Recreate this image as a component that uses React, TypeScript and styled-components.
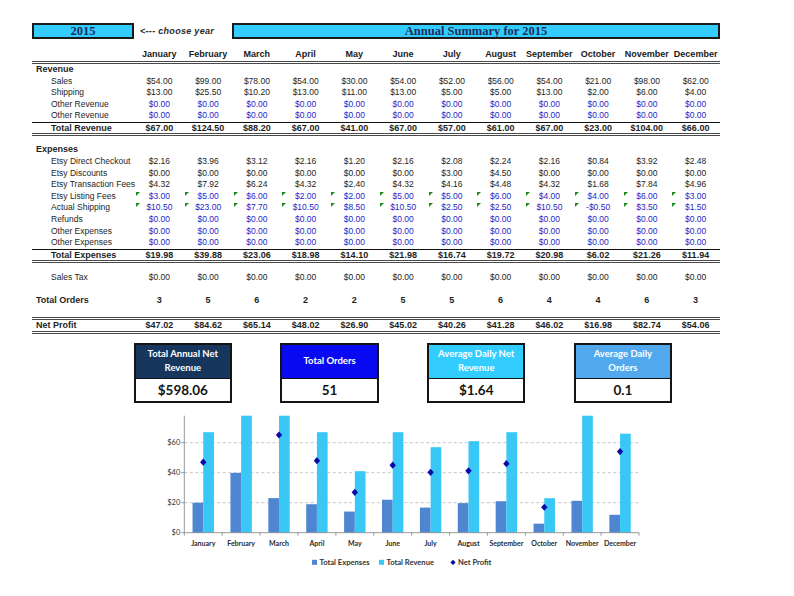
import React from 'react';
import styled, { createGlobalStyle, css } from 'styled-components';

const GlobalStyle = createGlobalStyle`
  html, body { margin: 0; padding: 0; background: #ffffff; }
  body { font-family: "Liberation Sans", Arial, sans-serif; color: #222; }
`;

const MONTHS = ['January', 'February', 'March', 'April', 'May', 'June', 'July', 'August', 'September', 'October', 'November', 'December'];

const fmt = (n: number) => (n < 0 ? `-$${Math.abs(n).toFixed(2)}` : `$${n.toFixed(2)}`);
const zeros = Array(12).fill(0);

const sales = [54, 99, 78, 54, 30, 54, 52, 56, 54, 21, 98, 62];
const shipping = [13, 25.5, 10.2, 13, 11, 13, 5, 5, 13, 2, 6, 4];
const totalRevenue = [67, 124.5, 88.2, 67, 41, 67, 57, 61, 67, 23, 104, 66];
const directCheckout = [2.16, 3.96, 3.12, 2.16, 1.2, 2.16, 2.08, 2.24, 2.16, 0.84, 3.92, 2.48];
const discounts = [0, 0, 0, 0, 0, 0, 3, 4.5, 0, 0, 0, 0];
const transaction = [4.32, 7.92, 6.24, 4.32, 2.4, 4.32, 4.16, 4.48, 4.32, 1.68, 7.84, 4.96];
const listing = [3, 5, 6, 2, 2, 5, 5, 6, 4, 4, 6, 3];
const actualShipping = [10.5, 23, 7.7, 10.5, 8.5, 10.5, 2.5, 2.5, 10.5, -0.5, 3.5, 1.5];
const totalExpenses = [19.98, 39.88, 23.06, 18.98, 14.1, 21.98, 16.74, 19.72, 20.98, 6.02, 21.26, 11.94];
const orders = [3, 5, 6, 2, 2, 5, 5, 6, 4, 4, 6, 3];
const netProfit = [47.02, 84.62, 65.14, 48.02, 26.9, 45.02, 40.26, 41.28, 46.02, 16.98, 82.74, 54.06];

type Tone = 'black' | 'blue';
type LineRow = { label: string; values: number[]; tone?: Tone; flag?: boolean };

const revenueRows: LineRow[] = [
  { label: 'Sales', values: sales },
  { label: 'Shipping', values: shipping },
  { label: 'Other Revenue', values: zeros, tone: 'blue' },
  { label: 'Other Revenue', values: zeros, tone: 'blue' },
];

const expenseRows: LineRow[] = [
  { label: 'Etsy Direct Checkout', values: directCheckout },
  { label: 'Etsy Discounts', values: discounts },
  { label: 'Etsy Transaction Fees', values: transaction },
  { label: 'Etsy Listing Fees', values: listing, tone: 'blue', flag: true },
  { label: 'Actual Shipping', values: actualShipping, tone: 'blue', flag: true },
  { label: 'Refunds', values: zeros, tone: 'blue' },
  { label: 'Other Expenses', values: zeros, tone: 'blue' },
  { label: 'Other Expenses', values: zeros, tone: 'blue' },
];

/* ---------- layout ---------- */

const Page = styled.div`
  width: 794px;
  height: 596px;
  box-sizing: border-box;
  padding: 23px 0 0 32px;
  overflow: hidden;
`;

const TopBar = styled.div`
  display: flex;
  align-items: center;
  width: 688px;
  height: 16px;
`;

const YearBox = styled.div`
  box-sizing: border-box;
  width: 102px;
  height: 16px;
  background: #33ccff;
  border: 2px solid #1a1a1a;
  display: flex;
  align-items: center;
  justify-content: center;
  font-family: "Liberation Serif", "Times New Roman", serif;
  font-weight: bold;
  font-size: 12.5px;
  color: #1d2d5c;
`;

const ChooseHint = styled.div`
  box-sizing: border-box;
  width: 98px;
  padding-left: 6px;
  font-family: "Liberation Sans", Arial, sans-serif;
  font-style: italic;
  font-weight: bold;
  font-size: 9px;
  letter-spacing: 0.3px;
  color: #2a2a2a;
  white-space: nowrap;
`;

const TitleBox = styled(YearBox)`
  flex: 1;
  width: auto;
`;

const Table = styled.div`
  width: 688px;
`;

const Row = styled.div<{ $h: number; $top?: string; $bottom?: string; $mt?: number }>`
  display: grid;
  grid-template-columns: 103px repeat(12, 48.75px);
  height: ${(p) => p.$h}px;
  line-height: ${(p) => p.$h}px;
  margin-top: ${(p) => p.$mt ?? 0}px;
  ${(p) => p.$top && `border-top: ${p.$top};`}
  ${(p) => p.$bottom && `border-bottom: ${p.$bottom};`}
`;

const Spacer = styled.div<{ $h: number }>`
  height: ${(p) => p.$h}px;
`;

const Label = styled.div<{ $indent?: boolean; $bold?: boolean }>`
  padding-left: ${(p) => (p.$indent ? 19 : 4)}px;
  font-size: ${(p) => (p.$bold ? 9 : 8.5)}px;
  font-weight: ${(p) => (p.$bold ? 'bold' : 'normal')};
  color: #1e1e1e;
  white-space: nowrap;
  overflow: visible;
`;

const Cell = styled.div<{ $tone?: Tone; $bold?: boolean; $flag?: boolean }>`
  position: relative;
  text-align: center;
  white-space: nowrap;
  overflow: hidden;
  font-size: ${(p) => (p.$bold ? 9 : 8.5)}px;
  font-weight: ${(p) => (p.$bold ? 'bold' : 'normal')};
  color: ${(p) => (p.$tone === 'blue' ? '#1f1fc6' : '#1e1e1e')};
  ${(p) =>
    p.$flag &&
    css`
      &::before {
        content: '';
        position: absolute;
        left: 1px;
        top: 1px;
        border-top: 4px solid #1d8a1d;
        border-right: 4px solid transparent;
      }
    `}
`;

const HeadCell = styled.div`
  text-align: center;
  white-space: nowrap;
  overflow: hidden;
  font-size: 9px;
  font-weight: bold;
  color: #1a1a1a;
`;

/* ---------- cards ---------- */

const CardRow = styled.div`
  display: flex;
  gap: 48.2px;
  margin: 9px 0 0 101.6px;
`;

const Card = styled.div`
  box-sizing: border-box;
  width: 98.5px;
  height: 60px;
  border: 2px solid #141414;
  display: flex;
  flex-direction: column;
`;

const CardHead = styled.div<{ $bg: string }>`
  height: 33px;
  flex: none;
  background: ${(p) => p.$bg};
  border-bottom: 1px solid #141414;
  color: #ffffff;
  font-family: Lato, "Open Sans", sans-serif;
  font-weight: bold;
  font-size: 9.5px;
  line-height: 14px;
  display: flex;
  align-items: center;
  justify-content: center;
  text-align: center;
  padding: 0 6px;
`;

const CardValue = styled.div`
  flex: 1;
  display: flex;
  align-items: center;
  justify-content: center;
  background: #ffffff;
  font-family: Lato, "Open Sans", sans-serif;
  font-weight: bold;
  font-size: 13.5px;
  color: #151515;
`;

const ChartWrap = styled.div`
  margin: 2px 0 0 108px;
  width: 520px;
  height: 180px;
`;

/* ---------- chart ---------- */

const X0 = 44.3;
const X1 = 499;
const BASE = 127.7;
const TOP = 10.7;
const K = 1.5;
const CW = (X1 - X0) / 12;
const BW = 10.7;

const Chart: React.FC = () => {
  const clipH = (v: number) => Math.min(v * K, BASE - TOP);
  return (
    <svg width="520" height="180" viewBox="0 0 520 180">
      {[20, 40, 60].map((v) => (
        <line key={v} x1={X0} x2={X1} y1={BASE - v * K} y2={BASE - v * K} stroke="#b8b8b8" strokeWidth="0.8" strokeDasharray="3 2.5" />
      ))}
      {totalExpenses.map((e, i) => {
        const cx = X0 + CW * (i + 0.5);
        const eh = clipH(e);
        const rh = clipH(totalRevenue[i]);
        return (
          <g key={i}>
            <rect x={cx - BW} y={BASE - eh} width={BW} height={eh} fill="#4f86d2" />
            <rect x={cx} y={BASE - rh} width={BW} height={rh} fill="#39c8f5" />
          </g>
        );
      })}
      {netProfit.map((n, i) => {
        if (n * K > BASE - TOP) return null;
        const cx = X0 + CW * (i + 0.5);
        const cy = BASE - n * K;
        return <polygon key={i} points={`${cx},${cy - 3.6} ${cx + 3.2},${cy} ${cx},${cy + 3.6} ${cx - 3.2},${cy}`} fill="#0a0aa6" />;
      })}
      <line x1={X0} x2={X0} y1={TOP} y2={BASE} stroke="#8c8c8c" strokeWidth="0.9" />
      <line x1={X0} x2={X1} y1={BASE} y2={BASE} stroke="#8c8c8c" strokeWidth="0.9" />
      {[0, 20, 40, 60].map((v) => (
        <line key={v} x1={X0 - 3} x2={X0} y1={BASE - v * K} y2={BASE - v * K} stroke="#8c8c8c" strokeWidth="0.9" />
      ))}
      {Array.from({ length: 13 }).map((_, i) => (
        <line key={i} x1={X0 + CW * i} x2={X0 + CW * i} y1={BASE} y2={BASE + 3} stroke="#8c8c8c" strokeWidth="0.9" />
      ))}
      {[0, 20, 40, 60].map((v) => (
        <text key={v} x={X0 - 4} y={BASE - v * K + 2.5} textAnchor="end" fontFamily="Lato, sans-serif" fontSize="7.5" fill="#333">
          {`$${v}`}
        </text>
      ))}
      {MONTHS.map((m, i) => (
        <text key={m} x={X0 + CW * (i + 0.5)} y={141} textAnchor="middle" fontFamily="Lato, sans-serif" fontWeight="bold" fontSize="7" fill="#2a2a2a">
          {m}
        </text>
      ))}
      <g fontFamily="Lato, sans-serif" fontWeight="bold" fontSize="7.6" fill="#333">
        <rect x={172} y={154.8} width={5} height={5} fill="#4f86d2" />
        <text x={179.5} y={160}>Total Expenses</text>
        <rect x={239} y={154.8} width={5} height={5} fill="#39c8f5" />
        <text x={246.5} y={160}>Total Revenue</text>
        <polygon points="313,154.8 315.6,157.4 313,160 310.4,157.4" fill="#0a0aa6" />
        <text x={318} y={160}>Net Profit</text>
      </g>
    </svg>
  );
};

/* ---------- app ---------- */

const ValueCells: React.FC<{ values: number[]; tone?: Tone; bold?: boolean; flag?: boolean; plain?: boolean }> = ({ values, tone, bold, flag, plain }) => (
  <>
    {values.map((v, i) => (
      <Cell key={i} $tone={tone} $bold={bold} $flag={flag}>
        {plain ? String(v) : fmt(v)}
      </Cell>
    ))}
  </>
);

const THICK = '3px double #4a4a4a';
const THIN = '1px solid #111';
const RH = 11.6;

export default function App() {
  return (
    <>
      <GlobalStyle />
      <Page>
        <TopBar>
          <YearBox>2015</YearBox>
          <ChooseHint>&lt;--- choose year</ChooseHint>
          <TitleBox>Annual Summary for 2015</TitleBox>
        </TopBar>

        <Table>
          <Row $h={13} $mt={9} $bottom={THICK}>
            <div />
            {MONTHS.map((m) => (
              <HeadCell key={m}>{m}</HeadCell>
            ))}
          </Row>

          <Row $h={RH}>
            <Label $bold>Revenue</Label>
          </Row>
          {revenueRows.map((r, i) => (
            <Row key={i} $h={RH}>
              <Label $indent>{r.label}</Label>
              <ValueCells values={r.values} tone={r.tone} flag={r.flag} />
            </Row>
          ))}
          <Row $h={10} $top={THIN} $bottom={THICK}>
            <Label $indent $bold>Total Revenue</Label>
            <ValueCells values={totalRevenue} bold />
          </Row>

          <Spacer $h={8.4} />

          <Row $h={RH}>
            <Label $bold>Expenses</Label>
          </Row>
          {expenseRows.map((r, i) => (
            <Row key={i} $h={RH}>
              <Label $indent>{r.label}</Label>
              <ValueCells values={r.values} tone={r.tone} flag={r.flag} />
            </Row>
          ))}
          <Row $h={10} $top={THIN} $bottom={THICK}>
            <Label $indent $bold>Total Expenses</Label>
            <ValueCells values={totalExpenses} bold />
          </Row>

          <Spacer $h={9.4} />
          <Row $h={RH}>
            <Label $indent>Sales Tax</Label>
            <ValueCells values={zeros} />
          </Row>

          <Spacer $h={11.4} />
          <Row $h={RH}>
            <Label $bold>Total Orders</Label>
            <ValueCells values={orders} bold plain />
          </Row>

          <Spacer $h={10.2} />
          <Row $h={11} $top={THICK} $bottom={THICK}>
            <Label $bold>Net Profit</Label>
            <ValueCells values={netProfit} bold />
          </Row>
        </Table>

        <CardRow>
          <Card>
            <CardHead $bg="#17365d">Total Annual Net Revenue</CardHead>
            <CardValue>$598.06</CardValue>
          </Card>
          <Card>
            <CardHead $bg="#0a0af2">Total Orders</CardHead>
            <CardValue>51</CardValue>
          </Card>
          <Card>
            <CardHead $bg="#33ccff">Average Daily Net Revenue</CardHead>
            <CardValue>$1.64</CardValue>
          </Card>
          <Card>
            <CardHead $bg="#52a8ec">Average Daily Orders</CardHead>
            <CardValue>0.1</CardValue>
          </Card>
        </CardRow>

        <ChartWrap>
          <Chart />
        </ChartWrap>
      </Page>
    </>
  );
}
